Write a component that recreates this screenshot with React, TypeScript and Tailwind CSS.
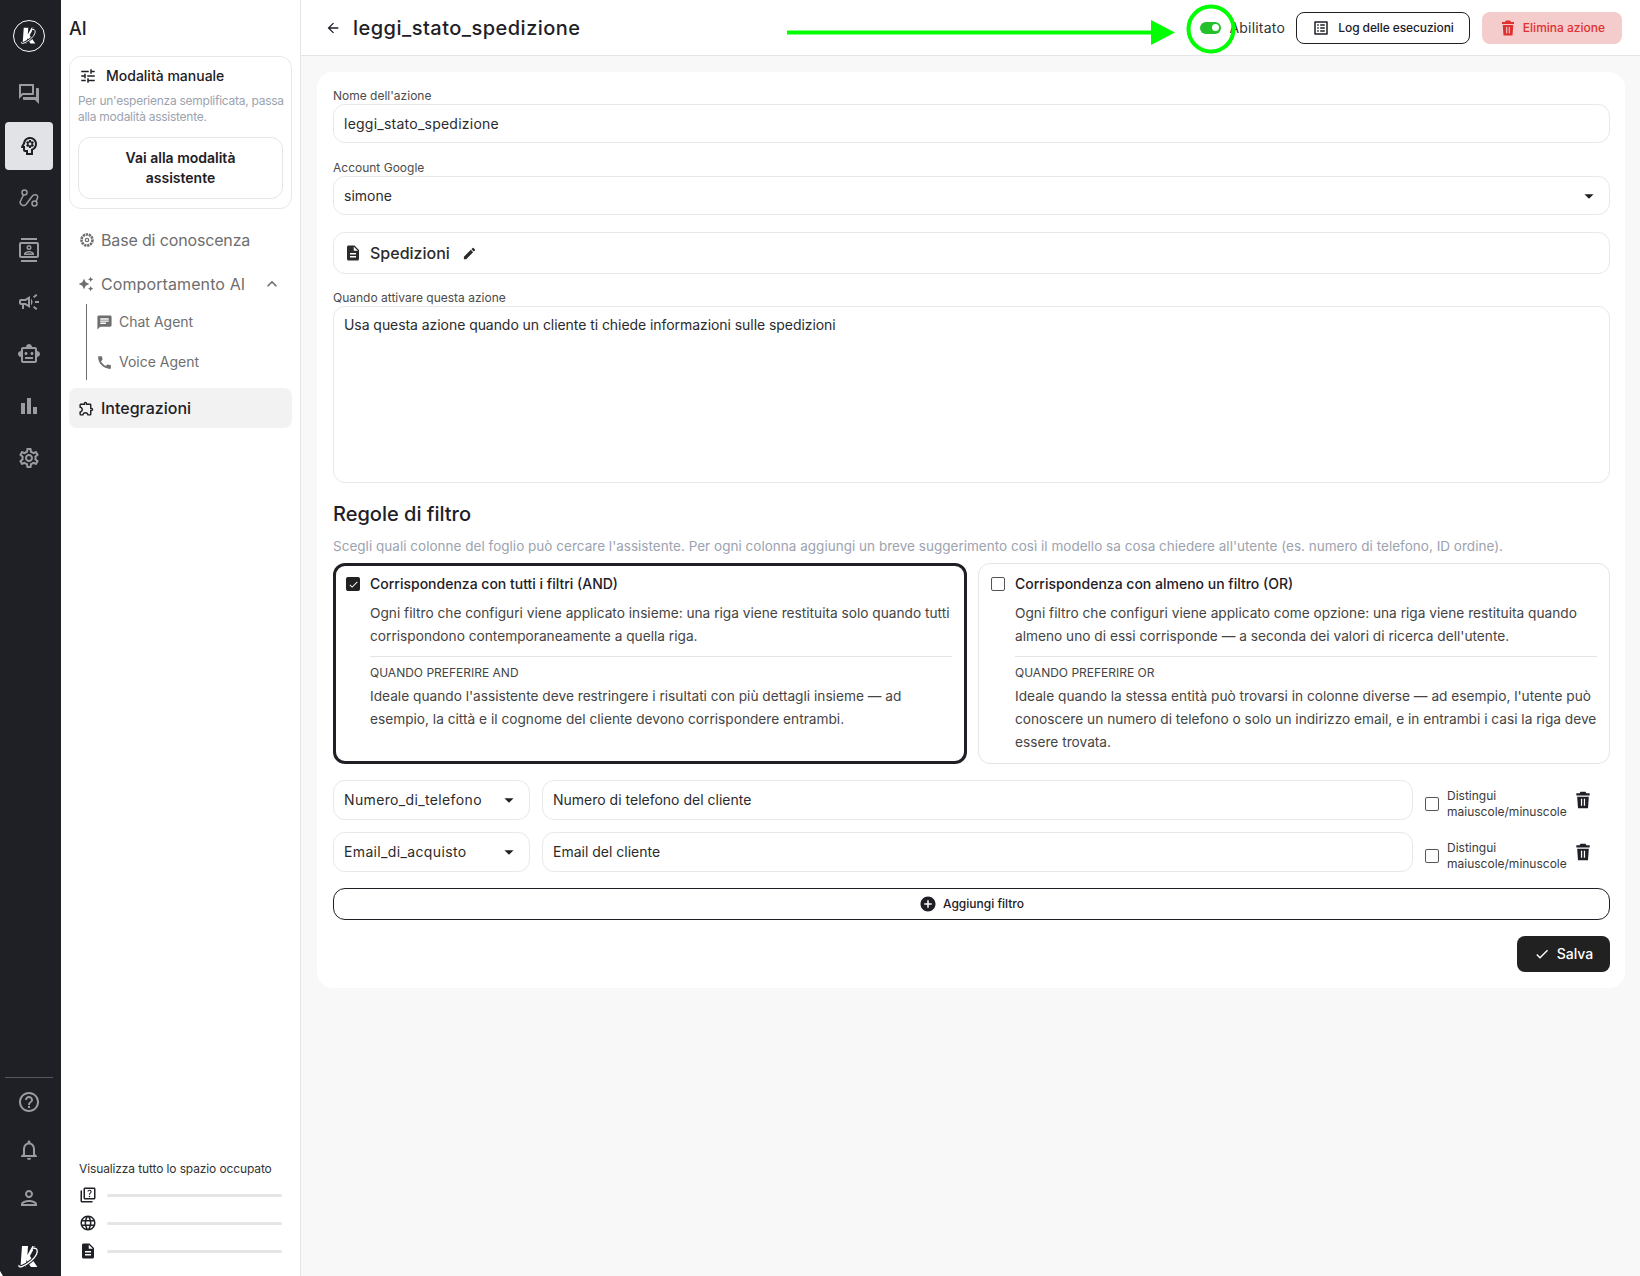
import type { ReactNode } from "react"
import {
  MdAddCircle,
  MdArrowBack,
  MdArrowDropDown,
  MdAutoAwesome,
  MdCall,
  MdChat,
  MdCheck,
  MdDescription,
  MdEdit,
  MdExpandLess,
  MdLanguage,
  MdOutlineBarChart,
  MdOutlineCampaign,
  MdOutlineContacts,
  MdOutlineExtension,
  MdOutlineForum,
  MdOutlineHelpOutline,
  MdOutlineListAlt,
  MdOutlineNotifications,
  MdOutlinePerson,
  MdOutlinePsychology,
  MdOutlineQuiz,
  MdOutlineSettings,
  MdOutlineSmartToy,
  MdTune,
} from "react-icons/md"

function Logo({ size }: { size: number }) {
  return (
    <svg width={size} height={size} viewBox="0 0 24 24" fill="none">
      <path d="M5 1h6l-.6 9 5-9h3l-5.5 10 7.500 11h-6.500l-4.400-7-.5 7H3.500z" fill="#fff" />
      <path d="M2 20C1 24 8 21 14 16c5-4 8-10 5-12.500l-3-.5" stroke="#1e2026" strokeWidth="3.400" />
      <path d="M2 20C1 24 8 21 14 16c5-4 8-10 5-12.500l-3-.5" stroke="#fff" strokeWidth="1.300" />
    </svg>
  )
}

function RingLogo() {
  return (
    <div className="flex h-8 w-8 items-center justify-center rounded-full border-[1.5px] border-white">
      <Logo size={18} />
    </div>
  )
}

function TrashIcon({ size, className }: { size: number; className?: string }) {
  return (
    <svg width={size} height={size} viewBox="0 0 24 24" fill="currentColor" className={className}>
      <path fillRule="evenodd" d="M9 2h6l1 2h4v2.500H4V4h4zM5 8h14L18 22H6zm4.500 2.500v8.500h1.500v-8.500zm3.500 0v8.500h1.500v-8.500z" />
    </svg>
  )
}

function RouteIcon() {
  return (
    <svg width="24" height="24" viewBox="0 0 24 24" fill="none" stroke="currentColor" strokeWidth="1.500">
      <circle cx="7.500" cy="6.500" r="2.500" />
      <circle cx="17.500" cy="17.500" r="2.500" />
      <path d="M6.500 9 3.500 15c-1.500 3 3 6 5.500 3.500l6-8c2-3 6.500-2 5.500 1.500l-1.500 3.500" />
    </svg>
  )
}

function KnowledgeIcon() {
  return (
    <svg width="16" height="16" viewBox="0 0 16 16" fill="none" stroke="currentColor">
      <circle cx="8" cy="8" r="5.500" strokeWidth="2.600" strokeDasharray="2.300 .7" />
      <circle cx="8" cy="8" r="1.700" strokeWidth="1.200" />
    </svg>
  )
}

function RailIcon({ children, active }: { children: ReactNode; active?: boolean }) {
  return (
    <div className={`flex h-12 w-12 items-center justify-center rounded ${active ? "bg-[#e2e3e6] text-[#1e2026]" : "text-[#9a9ca1]"}`}>
      {children}
    </div>
  )
}

function Field({ label, children }: { label: string; children: ReactNode }) {
  return (
    <div>
      <div className="h-4 text-xs leading-4 text-[#4b4b4b]">{label}</div>
      {children}
    </div>
  )
}

function Box({ children, className }: { children: ReactNode; className?: string }) {
  return (
    <div className={`flex items-center rounded-xl border border-[#e8e8e8] bg-white px-[10px] text-sm text-[#2b2b2b] ${className ?? ""}`}>
      {children}
    </div>
  )
}

function FilterCard({
  active,
  title,
  body,
  whenLabel,
  when,
}: {
  active?: boolean
  title: string
  body: string
  whenLabel: string
  when: string
}) {
  return (
    <div
      className={`rounded-xl bg-white pb-[9px] pr-3 ${
        active ? "border-[3px] border-[#1e2026] pl-[10px] pt-2" : "border border-[#e5e5e5] pl-3 pt-[10px]"
      }`}
    >
      <div className="flex h-5 items-center gap-[10px]">
        {active ? (
          <span className="flex h-[14px] w-[14px] items-center justify-center rounded-[2px] bg-[#212121] text-white">
            <MdCheck size={11} />
          </span>
        ) : (
          <span className="h-[14px] w-[14px] rounded-[2px] border border-[#555]" />
        )}
        <span className="text-sm font-medium text-[#1e2026]">{title}</span>
      </div>
      <div className="ml-6">
        <p className="mt-2 text-[13.7px] leading-[23px] text-[#444]">{body}</p>
        <div className="mt-2 h-px bg-[#e5e5e5]" />
        <div className="mt-2 h-4 text-xs leading-4 text-[#444]">{whenLabel}</div>
        <p className="mt-1 text-[13.7px] leading-[23px] text-[#444]">{when}</p>
      </div>
    </div>
  )
}

function FilterRow({ column, hint }: { column: string; hint: string }) {
  return (
    <div className="flex h-10 items-center gap-3 pr-[17px]">
      <Box className="h-10 w-[197px] justify-between">
        <span className="tracking-[0.36px]">{column}</span>
        <MdArrowDropDown size={22} className="mr-[-1px] text-[#1e2026]" />
      </Box>
      <Box className="h-10 flex-1">{hint}</Box>
      <span className="mt-[7px] h-[14px] w-[14px] rounded-[2px] border border-[#555]" />
      <div className="-ml-1 mt-[7px] w-[123px] text-xs leading-4 text-[#3a3a3a]">
        Distingui
        <br />
        maiuscole/minuscole
      </div>
      <TrashIcon size={20} className="-ml-[9px] text-[#1e2026]" />
    </div>
  )
}

function StorageRow({ icon }: { icon: ReactNode }) {
  return (
    <div className="flex h-[28px] items-center gap-[10px]">
      <span className="flex w-[18px] justify-center text-[#1e2026]">{icon}</span>
      <div className="h-[3px] flex-1 rounded-full bg-[#e5e5e5]" />
    </div>
  )
}

export default function App() {
  return (
    <div className="relative flex h-screen w-full overflow-hidden bg-white font-[Inter,sans-serif] text-[#1e2026]">
      {/* icon rail */}
      <aside className="flex w-[61px] shrink-0 flex-col items-center bg-[#1e2026] pr-[3px] pt-5">
        <RingLogo />
        <div className="mt-[18px] flex flex-col gap-1">
          <RailIcon><MdOutlineForum size={24} /></RailIcon>
          <RailIcon active><MdOutlinePsychology size={24} /></RailIcon>
          <RailIcon><RouteIcon /></RailIcon>
          <RailIcon><MdOutlineContacts size={24} /></RailIcon>
          <RailIcon><MdOutlineCampaign size={24} /></RailIcon>
          <RailIcon><MdOutlineSmartToy size={24} /></RailIcon>
          <RailIcon><MdOutlineBarChart size={24} /></RailIcon>
          <RailIcon><MdOutlineSettings size={24} /></RailIcon>
        </div>
        <div className="mt-auto h-px w-12 bg-[#55575c]" />
        <div className="flex flex-col">
          <RailIcon><MdOutlineHelpOutline size={24} /></RailIcon>
          <RailIcon><MdOutlineNotifications size={24} /></RailIcon>
          <RailIcon><MdOutlinePerson size={24} /></RailIcon>
        </div>
        <div className="mb-[7px] mt-[23px]">
          <Logo size={24} />
        </div>
      </aside>

      {/* section sidebar */}
      <aside className="flex w-[240px] shrink-0 flex-col border-r border-[#e5e5e5] px-2 pb-[11px]">
        <div className="mt-[17px] h-6 text-lg font-medium leading-6">AI</div>
        <div className="mt-[15px] rounded-xl border border-[#e8e8e8] px-2 pb-[9px] pt-[9px]">
          <div className="flex h-5 items-center gap-[9px] pl-[1px] text-sm font-medium">
            <MdTune size={18} />
            Modalità manuale
          </div>
          <p className="mt-[7px] whitespace-nowrap text-xs leading-4 tracking-[-0.26px] text-[#9ca3af]">
            Per un'esperienza semplificata, passa
            <br />
            alla modalità assistente.
          </p>
          <button className="mt-3 h-[62px] w-full rounded-xl border border-[#e5e5e5] px-6 text-sm font-semibold leading-5">
            Vai alla modalità assistente
          </button>
        </div>
        <div className="mt-[19px] flex h-6 items-center gap-[6px] pl-[10px] text-base tracking-[-0.15px] text-[#6e6e6e]">
          <KnowledgeIcon />
          Base di conoscenza
        </div>
        <div className="mt-5 flex h-6 items-center gap-[7px] pl-[9px] text-base tracking-[0.1px] text-[#6e6e6e]">
          <MdAutoAwesome size={16} />
          Comportamento AI
          <MdExpandLess size={20} className="ml-auto mr-[10px]" />
        </div>
        <div className="ml-[17px] mt-2 flex h-[76px] flex-col justify-between border-l border-[#6e6e6e] py-[8px] pl-[9px] text-sm text-[#6e6e6e]">
          <div className="flex h-5 items-center gap-[6px]"><MdChat size={17} />Chat Agent</div>
          <div className="flex h-5 items-center gap-[6px]"><MdCall size={17} />Voice Agent</div>
        </div>
        <div className="mt-2 flex h-10 items-center gap-[6px] rounded-lg bg-[#f2f2f2] pl-[9px] text-base font-medium">
          <MdOutlineExtension size={17} />
          Integrazioni
        </div>
        <div className="mt-auto px-[10px]">
          <div className="mb-1 h-4 whitespace-nowrap text-xs leading-4 tracking-[-0.12px] text-[#333]">Visualizza tutto lo spazio occupato</div>
          <StorageRow icon={<MdOutlineQuiz size={18} />} />
          <StorageRow icon={<MdLanguage size={18} />} />
          <StorageRow icon={<MdDescription size={18} />} />
        </div>
      </aside>

      <div className="flex min-w-0 flex-1 flex-col">
        <header className="flex h-[56px] shrink-0 items-center border-b border-[#e5e5e5] pl-6 pr-[18px]">
          <MdArrowBack size={16} />
          <h1 className="ml-3 text-xl font-medium tracking-[0.47px]">leggi_stato_spedizione</h1>
          <span className="ml-auto flex h-3 w-[21px] items-center justify-end rounded-full bg-[#22c02a] pr-[2px]">
            <span className="h-[7px] w-[7px] rounded-full bg-white" />
          </span>
          <span className="ml-2 text-sm tracking-[0.2px] text-[#333]">Abilitato</span>
          <button className="ml-[11px] flex h-8 w-[174px] items-center justify-center gap-2 rounded-lg border border-[#1e2026] text-xs font-medium tracking-[-0.1px]">
            <MdOutlineListAlt size={18} />
            Log delle esecuzioni
          </button>
          <button className="ml-3 flex h-8 w-[140px] items-center justify-center gap-[6px] rounded-lg bg-[#f5cccc] text-xs font-medium text-[#e03131]">
            <TrashIcon size={18} />
            Elimina azione
          </button>
        </header>

        <main className="min-h-0 flex-1 bg-[#f8f8f8] pl-4 pr-[15px] pt-4">
          <div className="rounded-2xl bg-white pb-4 pl-4 pr-[15px] pt-4">
            <Field label="Nome dell'azione">
              <Box className="h-[39px]"><span className="tracking-[0.24px]">leggi_stato_spedizione</span></Box>
            </Field>
            <div className="mt-[17px]">
              <Field label="Account Google">
                <Box className="h-[39px] justify-between">
                  simone
                  <MdArrowDropDown size={22} className="mr-[-1px] text-[#1e2026]" />
                </Box>
              </Field>
            </div>
            <Box className="mt-[17px] h-[42px] gap-2 text-[16px] font-medium">
              <MdDescription size={18} />
              Spedizioni
              <MdEdit size={15} className="ml-1" />
            </Box>
            <div className="mt-4">
              <Field label="Quando attivare questa azione">
                <div className="h-[177px] rounded-xl border border-[#e8e8e8] px-[10px] pt-2 text-sm tracking-[-0.06px] text-[#2b2b2b]">
                  Usa questa azione quando un cliente ti chiede informazioni sulle spedizioni
                </div>
              </Field>
            </div>
            <h2 className="mt-[17px] h-7 text-xl font-medium leading-7">Regole di filtro</h2>
            <p className="mt-[10px] h-4 whitespace-nowrap text-[13.5px] leading-4 tracking-[0.02px] text-[#9ca3af]">
              Scegli quali colonne del foglio può cercare l'assistente. Per ogni colonna aggiungi un breve suggerimento così il modello sa cosa chiedere all'utente (es. numero di telefono, ID ordine).
            </p>
            <div className="mt-[9px] grid grid-cols-[634px_1fr] gap-[11px]">
              <FilterCard
                active
                title="Corrispondenza con tutti i filtri (AND)"
                body="Ogni filtro che configuri viene applicato insieme: una riga viene restituita solo quando tutti corrispondono contemporaneamente a quella riga."
                whenLabel="QUANDO PREFERIRE AND"
                when="Ideale quando l'assistente deve restringere i risultati con più dettagli insieme — ad esempio, la città e il cognome del cliente devono corrispondere entrambi."
              />
              <FilterCard
                title="Corrispondenza con almeno un filtro (OR)"
                body="Ogni filtro che configuri viene applicato come opzione: una riga viene restituita quando almeno uno di essi corrisponde — a seconda dei valori di ricerca dell'utente."
                whenLabel="QUANDO PREFERIRE OR"
                when="Ideale quando la stessa entità può trovarsi in colonne diverse — ad esempio, l'utente può conoscere un numero di telefono o solo un indirizzo email, e in entrambi i casi la riga deve essere trovata."
              />
            </div>
            <div className="mt-4 flex flex-col gap-3">
              <FilterRow column="Numero_di_telefono" hint="Numero di telefono del cliente" />
              <FilterRow column="Email_di_acquisto" hint="Email del cliente" />
            </div>
            <button className="mt-4 flex h-8 w-full items-center justify-center gap-[6px] rounded-xl border border-[#1e2026] text-xs font-medium">
              <MdAddCircle size={18} />
              Aggiungi filtro
            </button>
            <div className="mt-4 flex justify-end">
              <button className="flex h-9 w-[93px] items-center justify-center gap-[7px] rounded-lg bg-[#212121] text-sm font-medium text-white">
                <MdCheck size={16} />
                Salva
              </button>
            </div>
          </div>
        </main>
      </div>

      {/* green annotation drawn over the screenshot */}
      <svg className="pointer-events-none absolute left-0 top-0" width="1640" height="60" fill="none">
        <path d="M787 32.500h366" stroke="#00ff00" strokeWidth="4" />
        <path d="M1151 20l24 12.500-24 12.500z" fill="#00ff00" />
        <circle cx="1211" cy="29" r="22.500" stroke="#00ff00" strokeWidth="4" />
      </svg>
      <span className="absolute bottom-0 left-0 h-[5px] w-[3px] bg-white [clip-path:polygon(0_0,100%_100%,0_100%)]" />
    </div>
  )
}
